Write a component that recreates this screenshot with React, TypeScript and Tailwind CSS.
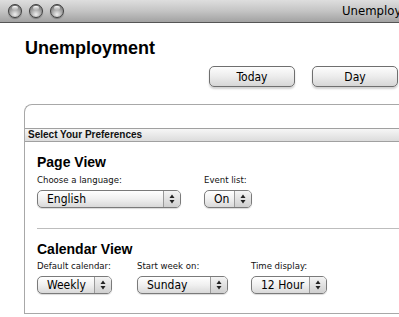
import React from "react";

const ui = { fontFamily: '"DejaVu Sans Condensed", "Liberation Sans", sans-serif' };
const head = { fontFamily: '"Liberation Sans", Arial, sans-serif' };

// graphite aqua window light
const Light = () => (
  <div className="relative w-[14px] h-[14px] rounded-full border border-[#3f3f3f] bg-[radial-gradient(circle_at_50%_78%,#eeeeee_0%,#a9a9a9_45%,#5e5e5e_100%)] shadow-[0_1px_1px_rgba(0,0,0,0.3)]">
    <div className="absolute left-[3px] top-[1px] w-[6px] h-[4px] rounded-full bg-gradient-to-b from-white to-white/10" />
  </div>
);

const Button = ({ label, w }: { label: string; w: string }) => (
  <div
    className={`${w} h-[21px] shrink-0 rounded-[5px] border border-[#6f6f6f] bg-gradient-to-b from-[#fdfdfd] via-[#ececec] to-[#d6d6d6] shadow-[0_2px_2px_rgba(0,0,0,0.18)] flex items-center justify-center text-[12px] text-black`}
    style={ui}
  >
    {label}
  </div>
);

const Arrows = () => (
  <svg width="6" height="10" viewBox="0 0 6 10">
    <path d="M3 0.5 L5.5 4 L0.5 4 Z" fill="#222" />
    <path d="M3 9.5 L5.5 6 L0.5 6 Z" fill="#222" />
  </svg>
);

const Select = ({ value, w }: { value: string; w: string }) => (
  <div
    className={`${w} h-[18px] flex rounded-[5px] border border-[#7a7a7a] bg-gradient-to-b from-[#ffffff] via-[#f0f0f0] to-[#d9d9d9] shadow-[0_1px_1px_rgba(0,0,0,0.15)] overflow-hidden`}
  >
    <div className="flex-1 flex items-center pl-[9px] text-[12px] text-black leading-none" style={ui}>
      {value}
    </div>
    <div className="w-[17px] border-l border-[#9a9a9a] flex items-center justify-center bg-gradient-to-b from-[#f4f4f4] to-[#cfcfcf]">
      <Arrows />
    </div>
  </div>
);

const Field = ({ label, value, col, w }: { label: string; value: string; col: string; w: string }) => (
  <div className={`${col} shrink-0 flex flex-col`}>
    <div className="text-[9.5px] leading-[12px] text-[#111] whitespace-nowrap" style={ui}>
      {label}
    </div>
    <div className="mt-[4px]">
      <Select value={value} w={w} />
    </div>
  </div>
);

export default function App() {
  return (
    <div className="w-[399px] h-[317px] overflow-hidden bg-white">
      <div className="w-[470px]">
        {/* Title bar */}
        <div className="h-[23px] flex items-center border-b border-[#555] bg-gradient-to-b from-[#dedede] via-[#c4c4c4] to-[#a2a2a2]">
          <div className="flex gap-[7px] pl-[8px]">
            <Light />
            <Light />
            <Light />
          </div>
          <div className="ml-[278px] text-[13px] text-black whitespace-nowrap" style={ui}>
            Unemployment
          </div>
        </div>

        <div className="pl-[25px]">
          <h1 className="pt-[13px] text-[18px] leading-[24px] font-bold text-black" style={head}>
            Unemployment
          </h1>

          {/* Nav buttons */}
          <div className="mt-[6px] flex gap-[17px] pl-[184px]">
            <Button label="Today" w="w-[86px]" />
            <Button label="Day" w="w-[86px]" />
          </div>
        </div>

        {/* Preferences panel */}
        <div className="ml-[24px] mt-[17px] border-t border-l border-b border-[#a8a8a8] rounded-tl-[8px]">
          <div className="h-[23px]" />
          <div className="h-[14px] border-y border-[#a0a0a0] bg-gradient-to-b from-[#f6f6f6] to-[#dcdcdc] flex items-center pl-[3px]">
            <span className="text-[10px] font-bold text-[#111] leading-none" style={head}>
              Select Your Preferences
            </span>
          </div>

          <div className="pl-[12px]">
            <h2 className="mt-[12px] text-[14px] leading-[16px] font-bold text-black" style={head}>
              Page View
            </h2>
            <div className="mt-[4px] flex">
              <Field label="Choose a language:" value="English" col="w-[167px]" w="w-[144px]" />
              <Field label="Event list:" value="On" col="w-[80px]" w="w-[48px]" />
            </div>

            <div className="mt-[20px] border-t border-[#bdbdbd]" />

            <h2 className="mt-[12px] text-[14px] leading-[16px] font-bold text-black" style={head}>
              Calendar View
            </h2>
            <div className="mt-[3px] flex">
              <Field label="Default calendar:" value="Weekly" col="w-[100px]" w="w-[75px]" />
              <Field label="Start week on:" value="Sunday" col="w-[114px]" w="w-[91px]" />
              <Field label="Time display:" value="12 Hour" col="w-[120px]" w="w-[76px]" />
            </div>
            <div className="h-[19px]" />
          </div>
        </div>
      </div>
    </div>
  );
}
